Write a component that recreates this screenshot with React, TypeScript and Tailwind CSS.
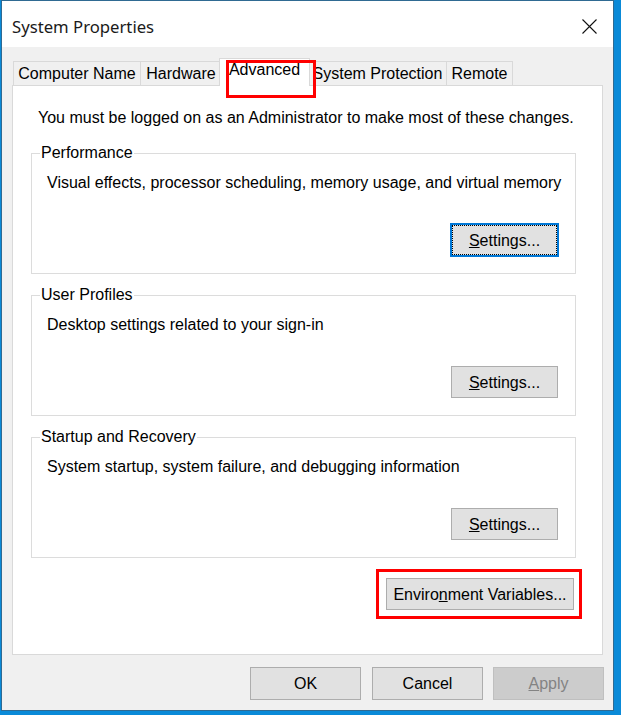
import type { ReactNode } from 'react';

const tabs = [
  { label: 'Computer Name', width: 'w-[127px]' },
  { label: 'Hardware', width: 'w-[81px]' },
  { label: 'Advanced', width: 'w-[91px]', active: true },
  { label: 'System Protection', width: 'w-[138px]' },
  { label: 'Remote', width: 'w-[67px] border-r' },
];

const Settings = ({ focused }: { focused?: boolean }) => (
  <div className="flex justify-end mt-[32px] mr-[17px] h-[32px]">
    {focused ? (
      <button className="relative -my-[1px] -mr-[1px] w-[109px] h-[34px] border-2 border-[#0078d7] bg-[#e1e1e1] flex items-center justify-center pt-[1px]">
        <span className="absolute inset-0 border border-dotted border-black" />
        <span><u>S</u>ettings...</span>
      </button>
    ) : (
      <button className="w-[107px] h-[32px] border border-[#adadad] bg-[#e1e1e1] flex items-center justify-center pt-[1px]">
        <span><u>S</u>ettings...</span>
      </button>
    )}
  </div>
);

const GroupBox = ({ title, text, children }: { title: string; text: string; children: ReactNode }) => (
  <fieldset className="ml-[18px] mr-[26px] border border-[#dcdcdc] pl-[8px] pb-[17px]">
    <legend className="px-[1px] leading-[18px]">{title}</legend>
    <div className="mt-[12px] pl-[7px]">{text}</div>
    {children}
  </fieldset>
);

const App = () => {
  return (
    <div className="w-[621px] h-[715px] bg-[#0a8ad8] pl-[1px] overflow-hidden [font-family:'Liberation_Sans',Arial,sans-serif] text-[16px] leading-[18px] text-black">
      <div className="w-[613px] h-[711px] border border-[#2f6a92] bg-[#f0f0f0] flex flex-col">

        {/* title bar */}
        <div className="h-[46px] bg-white flex items-start justify-between pl-[10px] pr-[16px] pt-[15px]">
          <span className="[font-family:'Noto_Sans',sans-serif] text-[16.7px] leading-[22px] text-[#1a1a1a]">System Properties</span>
          <svg width="15" height="15" viewBox="0 0 15 15" className="mt-[3px]">
            <path d="M0.5 0.5 L14.5 14.5 M14.5 0.5 L0.5 14.5" stroke="#111" strokeWidth="1.1" fill="none" />
          </svg>
        </div>

        <div className="flex flex-col pt-[11px] px-[10px] pb-[10px]">
          {/* tabs */}
          <div className="flex items-end pl-[1px] -mb-[1px] h-[28px]">
            {tabs.map(t =>
              t.active ? (
                <div key={t.label} className={`relative z-10 -mx-[2px] h-[28px] ${t.width} bg-white border-t border-l border-r border-[#d9d9d9] flex justify-center pt-[2px]`}>
                  {t.label}
                  <span className="absolute left-[6px] top-[1px] w-[90px] h-[38px] border-[3px] border-[#ff0000]" />
                </div>
              ) : (
                <div key={t.label} className={`mb-[1px] h-[24px] ${t.width} bg-[#f0f0f0] border-t border-l border-[#d9d9d9] flex items-center justify-center`}>
                  {t.label}
                </div>
              )
            )}
          </div>

          {/* tab panel */}
          <div className="h-[570px] bg-white border border-[#d9d9d9] flex flex-col pt-[23px]">
            <div className="pl-[25px] mb-[17px]">You must be logged on as an Administrator to make most of these changes.</div>

            <GroupBox title="Performance" text="Visual effects, processor scheduling, memory usage, and virtual memory">
              <Settings focused />
            </GroupBox>

            <div className="mt-[12px]">
              <GroupBox title="User Profiles" text="Desktop settings related to your sign-in">
                <Settings />
              </GroupBox>
            </div>

            <div className="mt-[12px]">
              <GroupBox title="Startup and Recovery" text="System startup, system failure, and debugging information">
                <Settings />
              </GroupBox>
            </div>

            <div className="flex justify-end mt-[20px] pr-[28px]">
              <div className="relative">
                <button className="w-[188px] h-[32px] border border-[#adadad] bg-[#e1e1e1] flex items-center justify-center pt-[1px]">
                  <span>Enviro<u>n</u>ment Variables...</span>
                </button>
                <span className="absolute -left-[10px] -right-[8px] -top-[9px] -bottom-[9px] border-[3px] border-[#ff0000]" />
              </div>
            </div>
          </div>

          {/* dialog buttons */}
          <div className="flex justify-end mt-[12px] mr-[-1px]">
            <button className="w-[111px] h-[33px] border border-[#adadad] bg-[#e1e1e1]">OK</button>
            <button className="ml-[11px] w-[111px] h-[33px] border border-[#adadad] bg-[#e1e1e1]">Cancel</button>
            <button className="ml-[10px] w-[111px] h-[33px] border border-[#bfbfbf] bg-[#cccccc] text-[#838383]"><u>A</u>pply</button>
          </div>
        </div>
      </div>
    </div>
  );
};

export default App;
